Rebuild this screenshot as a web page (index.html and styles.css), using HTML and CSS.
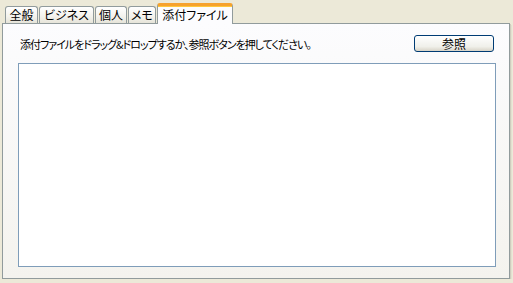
FILE: index.html
```html
<!DOCTYPE html>
<html lang="ja">
<head>
    <meta charset="UTF-8">
    <title>添付ファイル</title>
    <link rel="stylesheet" href="styles.css">
</head>
<body>
    <div class="dialog">
        <div class="tabs">
            <div class="tab tab-general">全般</div>
            <div class="tab tab-business">ビジネス</div>
            <div class="tab tab-personal">個人</div>
            <div class="tab tab-memo">メモ</div>
            <div class="tab tab-files active">添付ファイル</div>
        </div>
        <div class="panel">
            <div class="panel-head">
                <span class="hint">添付ファイルをドラッグ&amp;ドロップするか、参照ボタンを押してください。</span>
                <button class="browse-button">参照</button>
            </div>
            <div class="drop-area"></div>
        </div>
    </div>
</body>
</html>
```

FILE: styles.css
```css
* {
    margin: 0;
    padding: 0;
    box-sizing: border-box;
}

body {
    background-color: #ece9d8;
    font-family: 'Noto Sans CJK JP', sans-serif;
    font-size: 11px;
    letter-spacing: -1px;
    color: #000;
    font-feature-settings: "palt";
}

.dialog {
    padding: 2px 0 0 2px;
}

/* Tab strip */
.tabs {
    display: flex;
    align-items: flex-end;
    height: 21px;
    padding-left: 3px;
    position: relative;
    z-index: 1;
}

.tab {
    height: 17px;
    margin-right: 1px;
    line-height: 15px;
    font-size: 12px;
    letter-spacing: 0;
    text-align: center;
    border: 1px solid #919b9c;
    border-bottom: none;
    border-radius: 3px 3px 0 0;
    background: linear-gradient(#ffffff, #f3f2ec 60%, #e6e4d9);
    white-space: nowrap;
}

.tab-general { width: 33px; }
.tab-business { width: 55px; }
.tab-personal { width: 32px; }
.tab-memo { width: 28px; }
.tab-files { width: 76px; }

.tab.active {
    height: 21px;
    margin-bottom: -1px;
    line-height: 18px;
    border-top: 3px solid #f6a22d;
    border-radius: 3px 3px 0 0;
    background: #fcfcfe;
    box-shadow: inset 0 1px 0 #ffc83c;
}

/* Panel */
.panel {
    width: 508px;
    height: 256px;
    padding: 11px 13px 0 15px;
    border: 1px solid #919b9c;
    background: linear-gradient(#fcfcfe, #f4f3ee);
    box-shadow: 1px 1px 0 #d0cdbf, 2px 2px 0 #e3e0d0;
}

.panel-head {
    display: flex;
    justify-content: space-between;
    align-items: center;
    height: 17px;
}

.hint {
    padding-left: 2px;
}

.browse-button {
    width: 80px;
    height: 17px;
    margin-right: 2px;
    border: 1px solid #003c74;
    border-radius: 3px;
    background: linear-gradient(#ffffff, #f0f0ea 70%, #d8d4c8);
    font-family: inherit;
    font-size: 12px;
    line-height: 14px;
    letter-spacing: 0;
    font-feature-settings: "palt";
}

.drop-area {
    height: 204px;
    margin-top: 11px;
    border: 1px solid #7f9db9;
    background-color: #fff;
}
```
